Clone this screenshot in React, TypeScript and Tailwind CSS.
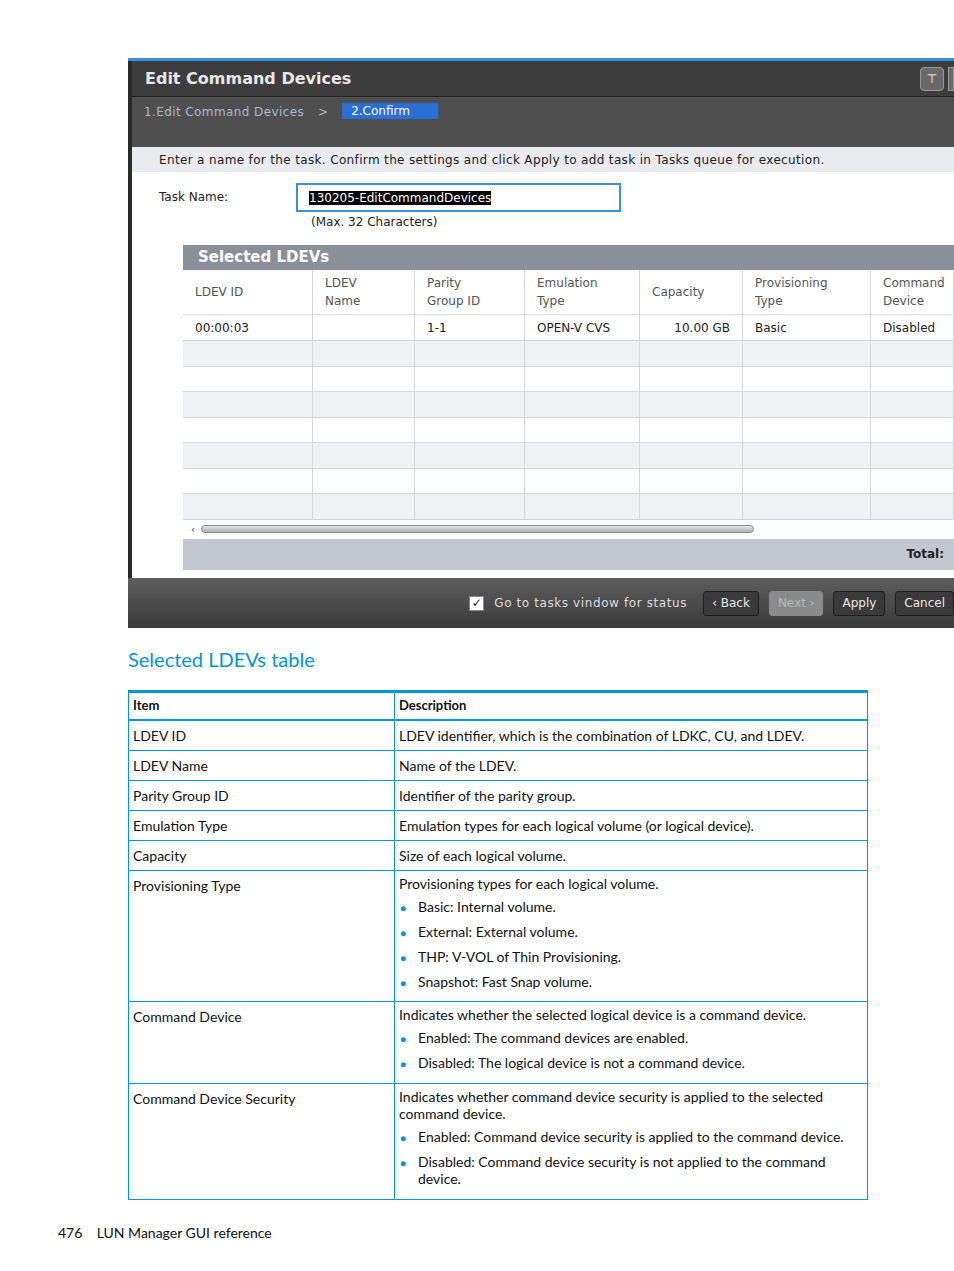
import React from "react";

const cols = [130, 102, 110, 115, 103, 128, 83];
const heads = [["LDEV ID"], ["LDEV", "Name"], ["Parity", "Group ID"], ["Emulation", "Type"], ["Capacity"], ["Provisioning", "Type"], ["Command", "Device"]];
const row1 = ["00:00:03", "", "1-1", "OPEN-V CVS", "10.00 GB", "Basic", "Disabled"];
const ui = { fontFamily: "Tahoma, 'DejaVu Sans', sans-serif" };

function Cells({ vals, bg, h, header }: { vals: (string | string[])[]; bg: string; h: string; header?: boolean }) {
  return (
    <div className={`flex ${bg} ${h} border-b border-[#d4d6da]`}>
      {cols.map((w, i) => (
        <div key={i} style={{ width: w }} className={`shrink-0 border-r border-[#d4d6da] px-3 flex flex-col justify-center text-[12px] overflow-hidden whitespace-nowrap ${header ? "text-[#555] leading-[18px]" : "text-[#222]"} ${i === 4 && !header ? "items-end pr-3" : ""}`}>
          {Array.isArray(vals[i]) ? (vals[i] as string[]).map((t) => <span key={t}>{t}</span>) : <span>{vals[i] as string}</span>}
        </div>
      ))}
    </div>
  );
}

function Btn({ t, dis }: { t: string; dis?: boolean }) {
  return (
    <div className={`h-[25px] px-2 flex items-center rounded-[3px] border text-[12px] ${dis ? "bg-[#8a8a8a] border-[#8a8a8a] text-[#b8b8b8]" : "bg-[#3a3a3a] border-[#1e1e1e] text-[#e8e8e8]"}`}>{t}</div>
  );
}

const rows: [string, React.ReactNode][] = [
  ["LDEV ID", "LDEV identifier, which is the combination of LDKC, CU, and LDEV."],
  ["LDEV Name", "Name of the LDEV."],
  ["Parity Group ID", "Identifier of the parity group."],
  ["Emulation Type", "Emulation types for each logical volume (or logical device)."],
  ["Capacity", "Size of each logical volume."],
];

function Bullets({ items }: { items: string[] }) {
  return (
    <div className="flex flex-col gap-[6px] mt-[6px]">
      {items.map((t) => (
        <div key={t} className="flex">
          <span className="w-[19px] shrink-0 text-[#0096d6] text-[10px] pl-[1px] pt-[2px]">●</span>
          <span>{t}</span>
        </div>
      ))}
    </div>
  );
}

export default function App() {
  return (
    <div className="w-[954px] h-[1271px] bg-white relative overflow-hidden" style={{ fontFamily: "Lato, 'Open Sans', sans-serif" }}>
      <div className="h-[58px]" />
      <div className="ml-[128px] w-[826px] h-[570px] flex flex-col bg-[#2a2a2a] pl-[4px]" style={ui}>
        <div className="h-[3px] bg-[#3b8fe0] -ml-[4px]" />
        <div className="h-[36px] bg-[#3d3d3d] flex items-center justify-between pl-[13px] border-b border-[#222]">
          <span className="text-[#e8e8e8] text-[16px] font-bold">Edit Command Devices</span>
          <div className="flex gap-1"><div className="w-[24px] h-[24px] rounded bg-[#6a6a6a] border border-[#999] text-white text-[12px] flex items-center justify-center">⊤</div><div className="w-[6px] h-[24px] bg-[#6a6a6a] border border-[#999]" /></div>
        </div>
        <div className="h-[50px] bg-[#4f4f4f] flex items-start pt-[6px] pl-[12px] text-[12px]">
          <span className="text-[#aab8d0] tracking-[0.4px]">1.Edit Command Devices</span>
          <span className="text-[#bbb] mx-[14px]">&gt;</span>
          <span className="bg-[#2a6fd6] text-white px-[9px] h-[16px] leading-[16px] w-[96px]">2.Confirm</span>
        </div>
        <div className="flex-1 bg-white flex flex-col">
          <div className="h-[25px] bg-[#e9ebef] flex items-center pl-[27px] text-[12px] text-[#222] tracking-[0.35px]">Enter a name for the task. Confirm the settings and click Apply to add task in Tasks queue for execution.</div>
          <div className="flex pl-[27px] pt-[11px] text-[12px] text-[#222]">
            <span className="w-[137px] pt-[5px]">Task Name:</span>
            <div>
              <div className="w-[325px] h-[29px] border-2 border-[#3b8fe0] flex items-center px-[11px]"><span className="bg-black text-white leading-[14px]">130205-EditCommandDevices</span></div>
              <div className="pl-[15px] mt-[1px]">(Max. 32 Characters)</div>
            </div>
          </div>
          <div className="ml-[51px] mt-[14px] flex flex-col">
            <div className="h-[25px] bg-[#8b8f97] text-white font-bold text-[15px] pl-[15px] flex items-center">Selected LDEVs</div>
            <Cells vals={heads} bg="bg-white" h="h-[45px]" header />
            <Cells vals={row1} bg="bg-white" h="h-[26px]" />
            {[0, 1, 2, 3, 4, 5, 6].map((i) => (
              <Cells key={i} vals={["", "", "", "", "", "", ""]} bg={i % 2 === 0 ? "bg-[#f0f1f3]" : "bg-white"} h="h-[25.5px]" />
            ))}
            <div className="h-[19px] flex items-center pl-[8px] gap-[6px] bg-white">
              <span className="text-[10px] text-[#333]">‹</span>
              <div className="w-[553px] h-[8px] rounded-full border border-[#888] bg-gradient-to-b from-[#e8e8e8] to-[#b0b0b0]" />
            </div>
            <div className="h-[31px] bg-[#c3c7d0] flex items-center justify-end pr-[10px] text-[12px] font-bold text-[#222]">Total:</div>
          </div>
          <div className="flex-1" />
        </div>
        <div className="h-[50px] bg-gradient-to-b from-[#5e5e5e] to-[#3a3a3a] flex items-center justify-end gap-[10px] -ml-[4px]">
          <div className="flex items-center gap-[10px] mr-[6px]">
            <div className="w-[15px] h-[15px] bg-white border border-[#888] text-[#222] text-[12px] leading-[13px] text-center font-bold">✓</div>
            <span className="text-[#ddd] text-[12px] tracking-[0.6px]">Go to tasks vindow for status</span>
          </div>
          <Btn t="‹ Back" />
          <Btn t="Next ›" dis />
          <Btn t="Apply" />
          <Btn t="Cancel" />
        </div>
      </div>

      <div className="ml-[128px] mt-[18px] text-[20px] text-[#0096d6] leading-[26px]">Selected LDEVs table</div>

      <div className="ml-[128px] mt-[18px] w-[740px] border-t-[3px] border-[#0096d6] text-[14px] text-[#111]">
        <div className="flex border-b-2 border-l border-[#0096d6] h-[28px] font-bold text-[13px]">
          <div className="w-[266px] border-r border-[#0096d6] px-[4px] flex items-center">Item</div>
          <div className="flex-1 border-r border-[#0096d6] px-[4px] flex items-center">Description</div>
        </div>
        {rows.map(([a, b]) => (
          <div key={a} className="flex border-b border-l border-[#0096d6] h-[30px]">
            <div className="w-[266px] border-r border-[#0096d6] px-[4px] pt-[4px]">{a}</div>
            <div className="flex-1 border-r border-[#0096d6] px-[4px] pt-[4px]">{b}</div>
          </div>
        ))}
        {([
          ["Provisioning Type", "Provisioning types for each logical volume.", ["Basic: Internal volume.", "External: External volume.", "THP: V-VOL of Thin Provisioning.", "Snapshot: Fast Snap volume."], "h-[131px]"],
          ["Command Device", "Indicates whether the selected logical device is a command device.", ["Enabled: The command devices are enabled.", "Disabled: The logical device is not a command device."], "h-[82px]"],
          ["Command Device Security", "Indicates whether command device security is applied to the selected command device.", ["Enabled: Command device security is applied to the command device.", "Disabled: Command device security is not applied to the command device."], "h-[116px]"],
        ] as [string, string, string[], string][]).map(([a, b, list, h]) => (
          <div key={a} className={`flex border-b border-l border-[#0096d6] ${h}`}>
            <div className="w-[266px] border-r border-[#0096d6] px-[4px] pt-[4px]">{a}</div>
            <div className="flex-1 border-r border-[#0096d6] px-[4px] pt-[4px] leading-[17px]">{b}<Bullets items={list} /></div>
          </div>
        ))}
      </div>

      <div className="absolute left-[58px] top-[1222px] text-[14px] text-[#111]">476&nbsp;&nbsp;&nbsp;&nbsp;LUN Manager GUI reference</div>
    </div>
  );
}
